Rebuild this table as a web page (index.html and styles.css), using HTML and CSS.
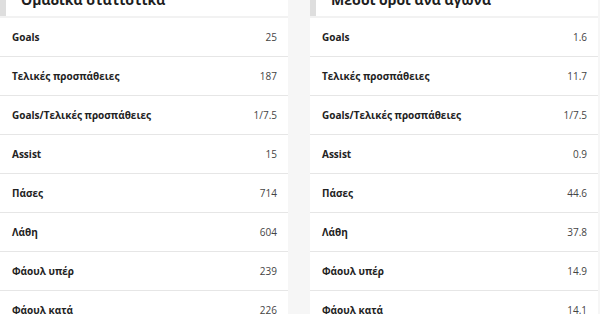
FILE: index.html
```html
<!DOCTYPE html>
<html lang="el">
<head>
<meta charset="utf-8">
<title>Στατιστικά</title>
<link rel="stylesheet" href="styles.css">
</head>
<body>
<div class="page">
  <section class="panel">
    <h2 class="panel-title">Ομαδικά στατιστικά</h2>
    <ul class="stats">
      <li class="stat"><span class="label">Goals</span><span class="value">25</span></li>
      <li class="stat"><span class="label">Τελικές προσπάθειες</span><span class="value">187</span></li>
      <li class="stat"><span class="label">Goals/Τελικές προσπάθειες</span><span class="value">1/7.5</span></li>
      <li class="stat"><span class="label">Assist</span><span class="value">15</span></li>
      <li class="stat"><span class="label">Πάσες</span><span class="value">714</span></li>
      <li class="stat"><span class="label">Λάθη</span><span class="value">604</span></li>
      <li class="stat"><span class="label">Φάουλ υπέρ</span><span class="value">239</span></li>
      <li class="stat"><span class="label">Φάουλ κατά</span><span class="value">226</span></li>
    </ul>
  </section>
  <section class="panel">
    <h2 class="panel-title">Μέσοι όροι ανά αγώνα</h2>
    <ul class="stats">
      <li class="stat"><span class="label">Goals</span><span class="value">1.6</span></li>
      <li class="stat"><span class="label">Τελικές προσπάθειες</span><span class="value">11.7</span></li>
      <li class="stat"><span class="label">Goals/Τελικές προσπάθειες</span><span class="value">1/7.5</span></li>
      <li class="stat"><span class="label">Assist</span><span class="value">0.9</span></li>
      <li class="stat"><span class="label">Πάσες</span><span class="value">44.6</span></li>
      <li class="stat"><span class="label">Λάθη</span><span class="value">37.8</span></li>
      <li class="stat"><span class="label">Φάουλ υπέρ</span><span class="value">14.9</span></li>
      <li class="stat"><span class="label">Φάουλ κατά</span><span class="value">14.1</span></li>
    </ul>
  </section>
</div>
</body>
</html>
```
FILE: styles.css
```css
html, body {
  margin: 0;
  padding: 0;
  background: #f6f6f6;
  font-family: "Open Sans", "Noto Sans", sans-serif;
  overflow: hidden;
}

.page {
  display: flex;
  gap: 22px;
  margin-top: -24px;
}

.panel {
  width: 288px;
  flex: none;
  background: #f2f2f2;
}

.panel-title {
  box-sizing: border-box;
  height: 40px;
  margin: 0 0 2px;
  padding: 16px 0 0 15px;
  border-left: 6px solid #dedede;
  background: #fff;
  font-size: 14px;
  line-height: 16px;
  font-weight: 700;
  color: #1e1e1e;
}

.stats {
  list-style: none;
  margin: 0;
  padding: 0;
}

.stat {
  display: flex;
  justify-content: space-between;
  align-items: center;
  height: 38px;
  padding: 0 11px 0 12px;
  background: #fff;
  border-bottom: 1px solid #e6e6e6;
  font-size: 10px;
}

.label {
  font-weight: 700;
  color: #222;
}

.value {
  color: #444;
}
```
